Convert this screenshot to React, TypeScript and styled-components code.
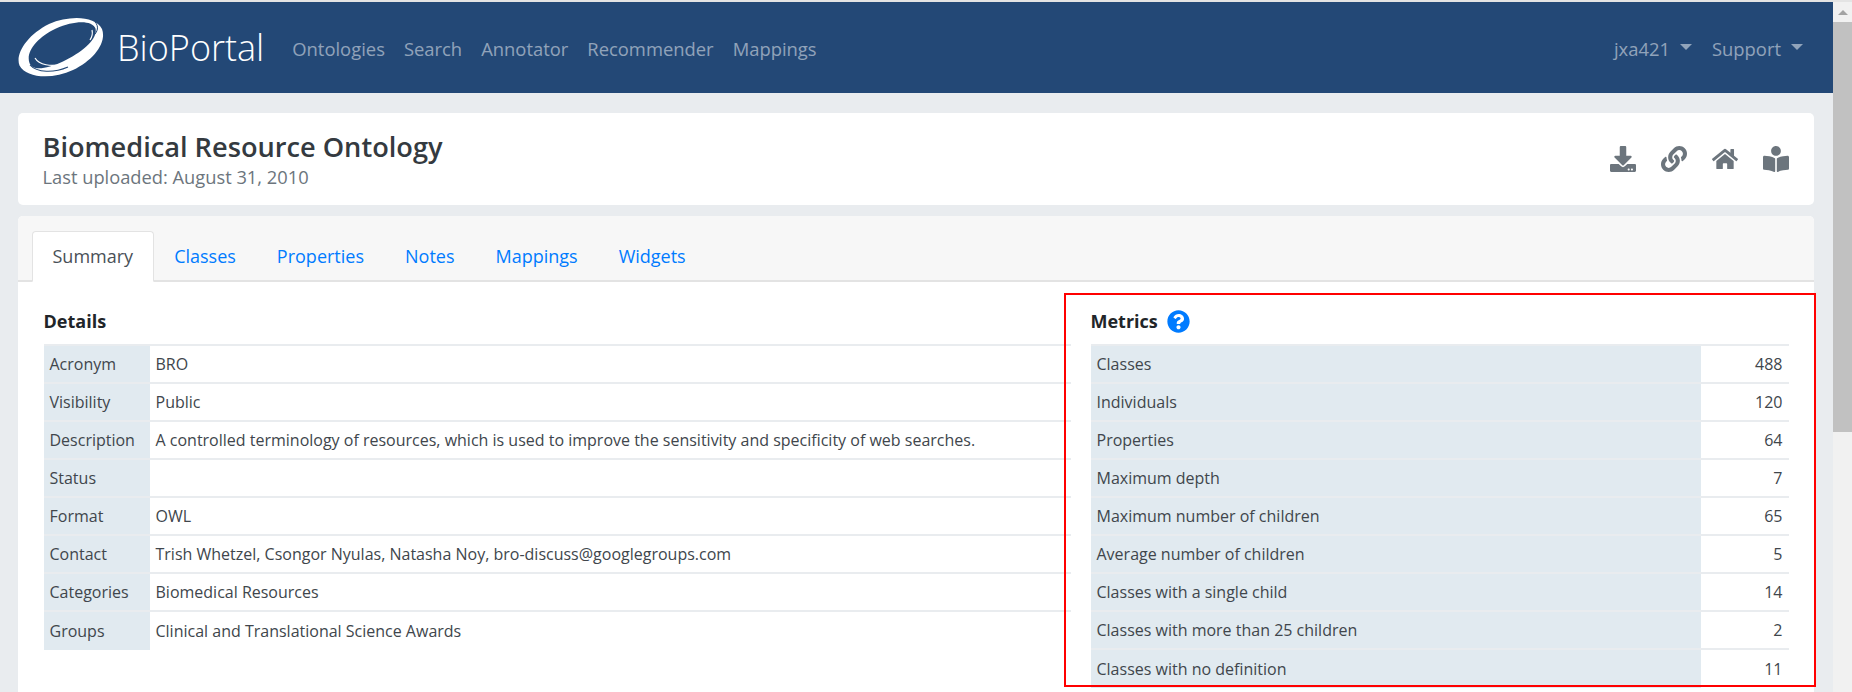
import * as React from 'react'
import styled, { createGlobalStyle } from 'styled-components'
import { FaBookReader, FaDownload, FaHome, FaLink, FaQuestionCircle } from 'react-icons/fa'

const GlobalStyle = createGlobalStyle`
  html, body {
    margin: 0;
    padding: 0;
    height: 692px;
    overflow: hidden;
    background: #e9ecef;
    font-family: 'Open Sans', 'Noto Sans', sans-serif;
    font-size: 16px;
    color: #343a40;
  }
`

const Shell = styled.div`
  display: flex;
  height: 692px;
  position: relative;
  overflow: hidden;
  border-top: 2px solid #e4e4e4;
  box-sizing: border-box;
`

const Page = styled.div`
  flex: 1;
  min-width: 0;
`

const Scrollbar = styled.div`
  width: 19px;
  background: #f1f1f1;
  display: flex;
  flex-direction: column;
`

const ScrollArrow = styled.div`
  height: 20px;
  display: flex;
  align-items: center;
  justify-content: center;

  &::before {
    content: '';
    border-left: 5px solid transparent;
    border-right: 5px solid transparent;
    border-bottom: 5px solid #a3a3a3;
  }
`

const ScrollThumb = styled.div`
  height: 410px;
  background: #c1c1c1;
`

const Navbar = styled.nav`
  height: 91px;
  background: #234876;
  display: flex;
  align-items: center;
  padding: 0 30px 0 18px;
`

const Brand = styled.div`
  display: flex;
  align-items: center;
  gap: 13px;
  margin-right: 28px;
`

const BrandName = styled.span`
  font-family: 'Open Sans', sans-serif;
  font-weight: 300;
  font-size: 36px;
  color: #fff;
`

const NavLinks = styled.div`
  display: flex;
  gap: 19px;
  flex: 1;
  padding-top: 1px;
`

const NavLink = styled.span`
  font-size: 18.4px;
  color: rgba(255, 255, 255, 0.5);
`

const NavRight = styled.div`
  display: flex;
  gap: 20px;
  padding-top: 1px;
`

const NavDropdown = styled(NavLink)`
  display: flex;
  align-items: center;
  gap: 10px;

  &::after {
    content: '';
    border-left: 6.5px solid transparent;
    border-right: 6.5px solid transparent;
    border-top: 6.5px solid currentColor;
    margin-bottom: 3px;
  }
`

const Content = styled.div`
  padding: 20px 19px 0 18px;
  display: flex;
  flex-direction: column;
  gap: 11px;
`

const TitleCard = styled.header`
  height: 92px;
  box-sizing: border-box;
  background: #fff;
  border-radius: 5px;
  padding: 0 25px 2px 24.5px;
  display: flex;
  align-items: center;
  justify-content: space-between;
`

const Title = styled.h1`
  margin: 0;
  font-size: 27.2px;
  line-height: 36px;
  font-weight: 600;
  color: #343a40;
`

const Subtitle = styled.div`
  font-size: 18.3px;
  line-height: 23px;
  color: #6c757d;
`

const Actions = styled.div`
  display: flex;
  gap: 25px;
  color: #6c757d;
  font-size: 26px;
  padding-top: 2px;

  svg {
    display: block;
  }
`

const MainCard = styled.section`
  background: #fff;
  border-radius: 5px 5px 0 0;
  height: 500px;
`

const Tabs = styled.div`
  height: 66px;
  box-sizing: border-box;
  background: #f7f7f7;
  border-bottom: 2px solid #e3e3e3;
  border-radius: 5px 5px 0 0;
  padding: 15px 14px 0;
  display: flex;
`

const Tab = styled.div<{ $active?: boolean }>`
  height: 51px;
  box-sizing: border-box;
  padding: 0 19.5px 2px;
  display: flex;
  align-items: center;
  font-size: 18px;
  border-radius: 4px 4px 0 0;
  color: ${p => (p.$active ? '#495057' : '#007bff')};
  background: ${p => (p.$active ? '#fff' : 'transparent')};
  border: 1px solid ${p => (p.$active ? '#e3e3e3' : 'transparent')};
  border-bottom-color: ${p => (p.$active ? '#fff' : 'transparent')};
`

const Columns = styled.div`
  display: grid;
  grid-template-columns: 1027px 698px;
  gap: 20px;
  padding: 0 0 0 25.5px;
`

const SectionTitle = styled.h2`
  margin: 0;
  height: 62px;
  padding-top: 16px;
  box-sizing: border-box;
  display: flex;
  align-items: center;
  gap: 9px;
  font-size: 18px;
  font-weight: 700;
  color: #212529;

  svg {
    color: #007bff;
    font-size: 23px;
  }
`

const Table = styled.div`
  border-top: 2px solid #e9ecef;
`

const Row = styled.div<{ $keyWidth: string }>`
  display: grid;
  grid-template-columns: ${p => p.$keyWidth} 1fr;
  height: 38px;
  box-sizing: border-box;
  border-bottom: 2px solid #e9ecef;

  &:last-child {
    border-bottom: none;
  }
`

const KeyCell = styled.div`
  background: #e1eaf0;
  padding: 0 6px;
  display: flex;
  align-items: center;
  color: #40464c;
`

const ValueCell = styled.div<{ $right?: boolean }>`
  padding: 0 6px;
  display: flex;
  align-items: center;
  justify-content: ${p => (p.$right ? 'flex-end' : 'flex-start')};
  color: #40464c;
`

const Highlight = styled.div`
  position: absolute;
  left: 1064px;
  top: 291px;
  width: 752px;
  height: 394px;
  box-sizing: border-box;
  border: 2px solid #f00;
`

const details: [string, string][] = [
  ['Acronym', 'BRO'],
  ['Visibility', 'Public'],
  ['Description', 'A controlled terminology of resources, which is used to improve the sensitivity and specificity of web searches.'],
  ['Status', ''],
  ['Format', 'OWL'],
  ['Contact', 'Trish Whetzel, Csongor Nyulas, Natasha Noy, bro-discuss@googlegroups.com'],
  ['Categories', 'Biomedical Resources'],
  ['Groups', 'Clinical and Translational Science Awards'],
]

const metrics: [string, string][] = [
  ['Classes', '488'],
  ['Individuals', '120'],
  ['Properties', '64'],
  ['Maximum depth', '7'],
  ['Maximum number of children', '65'],
  ['Average number of children', '5'],
  ['Classes with a single child', '14'],
  ['Classes with more than 25 children', '2'],
  ['Classes with no definition', '11'],
]

const Logo = () => (
  <svg width="86" height="60" viewBox="0 0 86 60">
    <path
      fill="#fff"
      fillRule="evenodd"
      d="M1.5 47.5C-3 36 9 17 31 6C52-3 77-2 84 11C89 24 76 42 55 52C34 62 8 60 1.5 47.5ZM11.5 45C14 53 28 51.5 45 43.5C65 34 80 21 77.5 10.5C74 2 56 2.5 38 10.5C19 19.5 7.5 34 11.5 45Z"
    />
    <path d="M12 47C19 55 36 55 50 49" fill="none" stroke="#234876" strokeWidth="1.1" />
    <path d="M75 18C80 14 81 8 77 4" fill="none" stroke="#234876" strokeWidth="1" />
    <path d="M17 40C21 47 33 49 45 46" fill="none" stroke="#fff" strokeWidth="1.2" />
    <path d="M72 22C74 19 75 16 74 12" fill="none" stroke="#fff" strokeWidth="1.2" />
  </svg>
)

const App = () => (
  <>
    <GlobalStyle />
    <Shell>
      <Page>
        <Navbar>
          <Brand>
            <Logo />
            <BrandName>BioPortal</BrandName>
          </Brand>
          <NavLinks>
            {['Ontologies', 'Search', 'Annotator', 'Recommender', 'Mappings'].map(l => (
              <NavLink key={l}>{l}</NavLink>
            ))}
          </NavLinks>
          <NavRight>
            <NavDropdown>jxa421</NavDropdown>
            <NavDropdown>Support</NavDropdown>
          </NavRight>
        </Navbar>
        <Content>
          <TitleCard>
            <div>
              <Title>Biomedical Resource Ontology</Title>
              <Subtitle>Last uploaded: August 31, 2010</Subtitle>
            </div>
            <Actions>
              <FaDownload />
              <FaLink />
              <FaHome />
              <FaBookReader />
            </Actions>
          </TitleCard>
          <MainCard>
            <Tabs>
              <Tab $active>Summary</Tab>
              {['Classes', 'Properties', 'Notes', 'Mappings', 'Widgets'].map(t => (
                <Tab key={t}>{t}</Tab>
              ))}
            </Tabs>
            <Columns>
              <div>
                <SectionTitle>Details</SectionTitle>
                <Table>
                  {details.map(([k, v]) => (
                    <Row key={k} $keyWidth="106px">
                      <KeyCell>{k}</KeyCell>
                      <ValueCell>{v}</ValueCell>
                    </Row>
                  ))}
                </Table>
              </div>
              <div>
                <SectionTitle>
                  Metrics <FaQuestionCircle />
                </SectionTitle>
                <Table>
                  {metrics.map(([k, v]) => (
                    <Row key={k} $keyWidth="610px">
                      <KeyCell>{k}</KeyCell>
                      <ValueCell $right>{v}</ValueCell>
                    </Row>
                  ))}
                </Table>
              </div>
            </Columns>
          </MainCard>
        </Content>
      </Page>
      <Scrollbar>
        <ScrollArrow />
        <ScrollThumb />
      </Scrollbar>
      <Highlight />
    </Shell>
  </>
)

export default App
